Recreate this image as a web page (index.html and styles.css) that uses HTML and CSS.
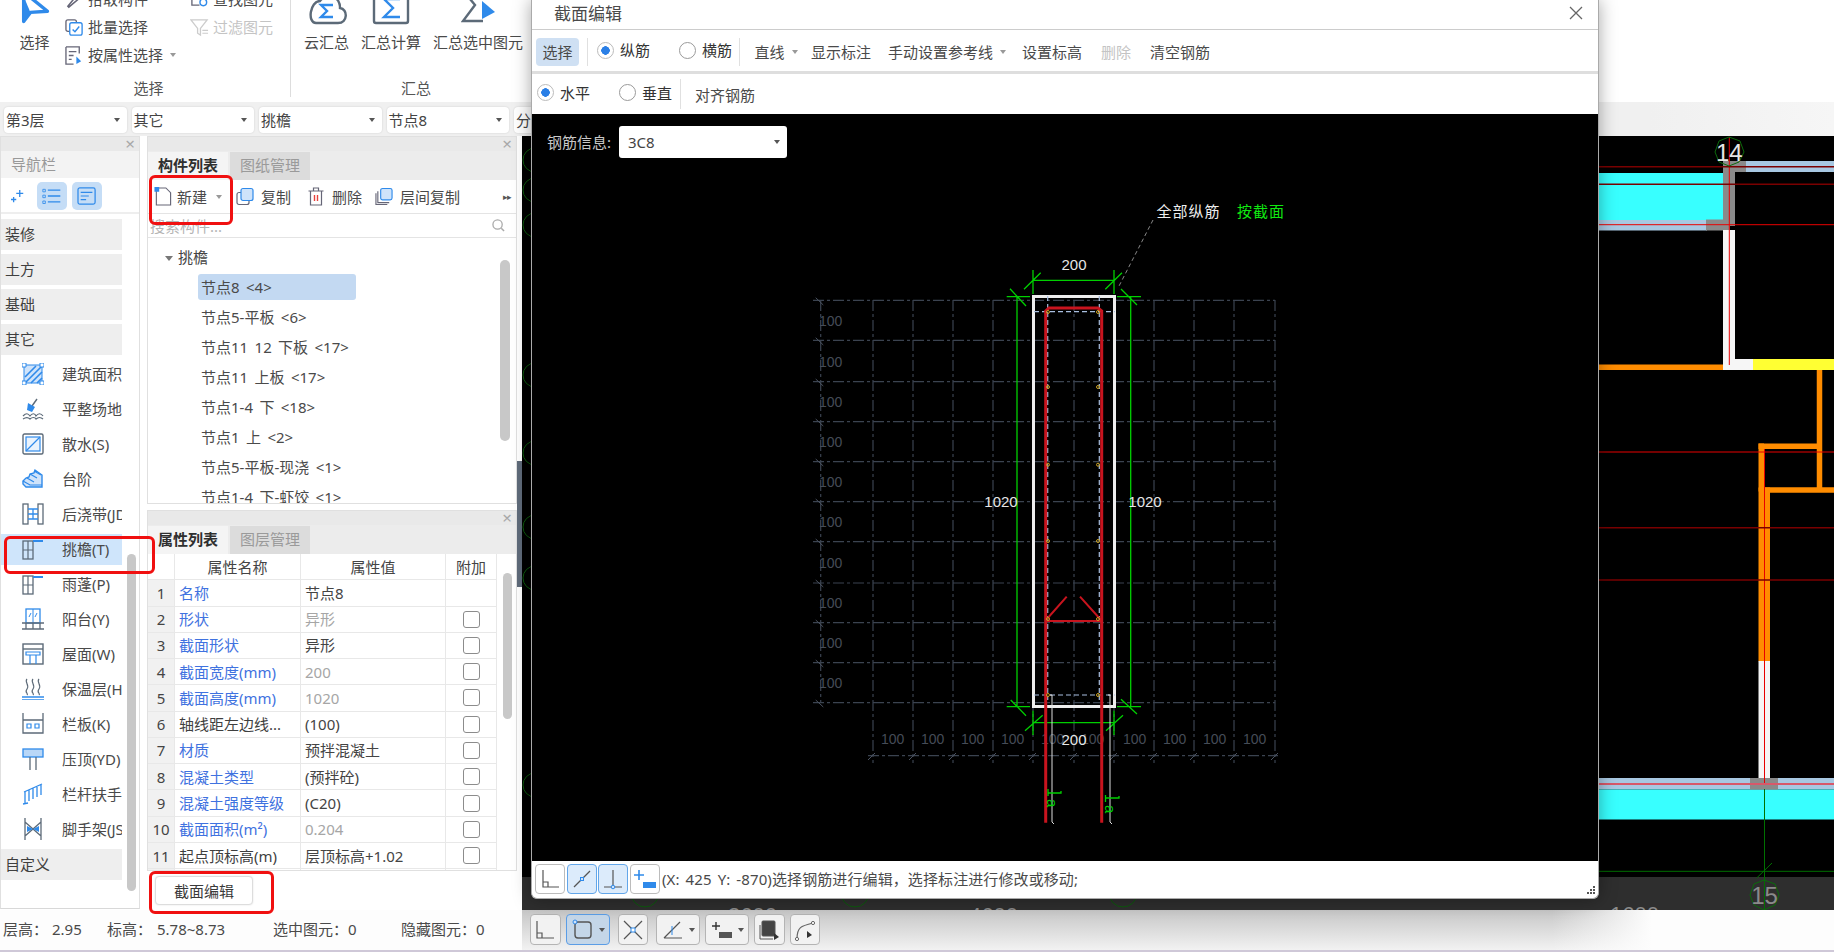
FILE: index.html
```html
<!DOCTYPE html>
<html lang="zh-CN">
<head>
<meta charset="utf-8">
<title>截面编辑</title>
<link rel="stylesheet" href="styles.css">
</head>
<body>
<div class="app">
  <header class="ribbon">
    <section class="group group-select">
      <div class="group-body">
        <div class="big-tool big-select">
          <svg class="big-icon" viewBox="0 0 26 30"><path d="M3 0v26l6-8 15-1z" fill="#fff" stroke="#2f8aea" stroke-width="3" stroke-linejoin="round"/><path d="M3 4v22l6-8z" fill="#2f8aea"/></svg>
          <span>选择</span>
        </div>
        <div class="small-col col-a">
          <div class="small-tool"><svg class="small-icon" viewBox="0 0 20 20"><path d="M3 17l10-12 3 3-12 10z" fill="none" stroke="#667" stroke-width="1.6"/></svg><span>拾取构件</span></div>
          <div class="small-tool"><svg class="small-icon" viewBox="0 0 20 20"><rect x="1" y="2" width="11" height="12" rx="2" fill="none" stroke="#667" stroke-width="1.4"/><rect x="5" y="5" width="13" height="13" rx="2" fill="#fff" stroke="#2f8aea" stroke-width="1.4"/><path d="M8 12l2.5 2.5L15 9" fill="none" stroke="#2f8aea" stroke-width="1.5"/></svg><span>批量选择</span></div>
          <div class="small-tool"><svg class="small-icon" viewBox="0 0 20 20"><path d="M1 1h14v7M1 1v18h8" fill="none" stroke="#667" stroke-width="1.4"/><path d="M4 6h8M4 10h5M4 14h3" stroke="#667" stroke-width="1.4"/><path d="M12 11v8l5-3z" fill="#2f8aea"/></svg><span>按属性选择</span><i class="caret caret-tool"></i></div>
        </div>
        <div class="small-col col-b">
          <div class="small-tool"><svg class="small-icon" viewBox="0 0 20 20"><path d="M2 6h12M2 6v10h8" fill="none" stroke="#667" stroke-width="1.4"/><circle cx="14" cy="13" r="3.5" fill="none" stroke="#2f8aea" stroke-width="1.5"/></svg><span>查找图元</span></div>
          <div class="small-tool is-disabled"><svg class="small-icon" viewBox="0 0 20 20"><path d="M1 2h17l-7 9v7l-3-2v-5z" fill="none" stroke="#ccc" stroke-width="1.4"/><path d="M13 13h6M13 16h6" stroke="#ccc" stroke-width="1.2"/></svg><span>过滤图元</span></div>
        </div>
      </div>
      <div class="group-label">选择</div>
    </section>
    <section class="group group-sum">
      <div class="group-body">
        <div class="big-tool"><svg class="big-icon cloud" viewBox="0 0 42 32"><path d="M10 30h22c10 0 10-14 2-15C34 4 22-2 14 8 4 8 1 30 10 30z" fill="#fff" stroke="#5c6a78" stroke-width="2.4"/><path d="M27 12H15l6 6-6 6h12" fill="none" stroke="#2f8aea" stroke-width="2.4"/></svg><span>云汇总</span></div>
        <div class="big-tool"><svg class="big-icon total" viewBox="0 0 38 32"><path d="M2 0v28a2 2 0 0 0 2 2h30a2 2 0 0 0 2-2V0" fill="none" stroke="#5c6a78" stroke-width="2.4"/><path d="M28 6H12l9 9-9 9h16" fill="none" stroke="#2f8aea" stroke-width="2.4"/></svg><span>汇总计算</span></div>
        <div class="big-tool"><svg class="big-icon sel" viewBox="0 0 34 32"><path d="M18 2H4l10 12L2 30h20" fill="none" stroke="#5c6a78" stroke-width="2.4" transform="translate(0 -2)"/><path d="M21 10v18l13-7z" fill="#2f8aea" transform="translate(0 -2)"/></svg><span>汇总选中图元</span></div>
      </div>
      <div class="group-label">汇总</div>
    </section>
  </header>

  <div class="filters">
    <div class="filter"><span>第3层</span><i class="caret caret-dark"></i></div>
    <div class="filter"><span>其它</span><i class="caret caret-dark"></i></div>
    <div class="filter"><span>挑檐</span><i class="caret caret-dark"></i></div>
    <div class="filter"><span>节点8</span><i class="caret caret-dark"></i></div>
    <div class="filter"><span>分层1</span><i class="caret caret-dark"></i></div>
  </div>

  <main class="work">
    <aside class="nav">
      <div class="dock-head"><span class="dock-x">×</span></div>
      <div class="nav-title">导航栏</div>
      <div class="nav-tools">
        <svg class="nav-spark" viewBox="0 0 16 16"><path d="M10 1v8M6 5h8M3 9v6M0 12h6" stroke="#2f8aea" stroke-width="1.5"/></svg>
        <span class="nav-btn"><svg viewBox="0 0 24 20"><path d="M1 2h3v3H1zM1 9h3v3H1zM1 16h3v3H1z" fill="none" stroke="#2f8aea"/><path d="M7 3h15M7 10h15M7 17h15" stroke="#2f8aea" stroke-width="1.6"/></svg></span>
        <span class="nav-btn"><svg viewBox="0 0 22 20"><rect x="1" y="1" width="19" height="18" rx="2" fill="none" stroke="#2f8aea" stroke-width="1.4"/><path d="M4 6h13M4 10h9M4 14h6" stroke="#2f8aea" stroke-width="1.3"/></svg></span>
      </div>
      <div class="nav-body">
        <ul class="nav-list">
          <li class="nav-cat">装修</li>
          <li class="nav-cat">土方</li>
          <li class="nav-cat">基础</li>
          <li class="nav-cat">其它</li>
          <li class="nav-item"><svg viewBox="0 0 22 22"><rect x="2" y="2" width="18" height="18" fill="#cfe3fa" stroke="#2f8aea"/><path d="M3 14L14 3M3 20L20 3M9 20L20 9M15 20l5-5" stroke="#2f8aea" stroke-width="1.6"/><path d="M0 0h4v4H0zM18 0h4v4h-4zM0 18h4v4H0zM18 18h4v4h-4z" fill="#fff" stroke="#2f8aea"/></svg><span>建筑面积</span></li>
          <li class="nav-item"><svg viewBox="0 0 22 22"><path d="M15 1l-5 7" stroke="#5c6a78" stroke-width="1.4"/><path d="M6 5l7 4-3 5-5-2z" fill="#2f8aea"/><path d="M1 18c3-3 5-3 7 0 2-3 5-3 6 0 2-3 5-3 7 0M1 21c3-2 5-2 7 0 2-2 5-2 6 0 2-2 5-2 7 0" fill="none" stroke="#5c6a78" stroke-width="1.2"/></svg><span>平整场地</span></li>
          <li class="nav-item"><svg viewBox="0 0 22 22"><rect x="1" y="1" width="20" height="20" rx="1.5" fill="#fff" stroke="#5c6a78" stroke-width="1.4"/><rect x="4" y="4" width="14" height="14" fill="#eaf3fd" stroke="#2f8aea" stroke-width="1.2"/><path d="M4 18L18 4" stroke="#2f8aea" stroke-width="1.2"/></svg><span>散水(S)</span></li>
          <li class="nav-item"><svg viewBox="0 0 22 22"><path d="M1 13l3-3 3-1 1-3 4-1 1-3 7 5v12H4l-3-3z" fill="#cfe3fa" stroke="#2f8aea" stroke-width="1.4"/><path d="M1 13l7 4h12M5 10l7 4M8 6l7 4M12 3l7 4" fill="none" stroke="#2f8aea" stroke-width="1.2"/></svg><span>台阶</span></li>
          <li class="nav-item"><svg viewBox="0 0 22 22"><rect x="1" y="1" width="5" height="20" fill="none" stroke="#5c6a78" stroke-width="1.3"/><rect x="16" y="1" width="5" height="20" fill="none" stroke="#5c6a78" stroke-width="1.3"/><path d="M6 6h10M6 11h10M6 16h10M11 6v10" stroke="#2f8aea" stroke-width="1.3"/></svg><span>后浇带(JD)</span></li>
          <li class="nav-item is-active"><svg viewBox="0 0 22 22"><rect x="1" y="3" width="10" height="18" fill="none" stroke="#5c6a78" stroke-width="1.3"/><path d="M6 3v18M1 12h10" stroke="#5c6a78" stroke-width="1.2"/><path d="M11 3h10" stroke="#2f8aea" stroke-width="2"/></svg><span>挑檐(T)</span></li>
          <li class="nav-item"><svg viewBox="0 0 22 22"><rect x="1" y="3" width="10" height="18" fill="none" stroke="#5c6a78" stroke-width="1.3"/><path d="M6 3v18M1 12h10" stroke="#5c6a78" stroke-width="1.2"/><path d="M11 4h10" stroke="#2f8aea" stroke-width="2"/></svg><span>雨蓬(P)</span></li>
          <li class="nav-item"><svg viewBox="0 0 22 22"><rect x="4" y="1" width="14" height="14" fill="none" stroke="#2f8aea" stroke-width="1.3"/><path d="M11 1v14M7 9l2-4M13 9l2-4" stroke="#2f8aea"/><path d="M0 15h22M0 21h22M4 15v6M11 15v6M18 15v6" stroke="#5c6a78" stroke-width="1.3"/></svg><span>阳台(Y)</span></li>
          <li class="nav-item"><svg viewBox="0 0 22 22"><rect x="1" y="1" width="20" height="20" fill="none" stroke="#5c6a78" stroke-width="1.4"/><path d="M1 6h20" stroke="#5c6a78" stroke-width="1.4"/><path d="M4 9h14v3H4zM8 12v9M14 12v9" fill="none" stroke="#2f8aea" stroke-width="1.2"/></svg><span>屋面(W)</span></li>
          <li class="nav-item"><svg viewBox="0 0 22 22"><path d="M5 1c-3 3 3 6 0 10s2 4 0 6M11 1c-3 3 3 6 0 10s2 4 0 6M17 1c-3 3 3 6 0 10s2 4 0 6" fill="none" stroke="#5c6a78" stroke-width="1.2"/><path d="M0 19h22M0 22h22" stroke="#2f8aea" stroke-width="1.3"/></svg><span>保温层(H)</span></li>
          <li class="nav-item"><svg viewBox="0 0 22 22"><path d="M1 0v20h20V0M1 7h20" fill="none" stroke="#5c6a78" stroke-width="1.3"/><path d="M5 11h4v4H5zM13 11h4v4h-4z" fill="none" stroke="#2f8aea" stroke-width="1.2"/></svg><span>栏板(K)</span></li>
          <li class="nav-item"><svg viewBox="0 0 22 22"><rect x="1" y="1" width="20" height="8" fill="#b9d7f7" stroke="#2f8aea" stroke-width="1.3"/><path d="M8 9v13M14 9v13" stroke="#5c6a78" stroke-width="1.3"/></svg><span>压顶(YD)</span></li>
          <li class="nav-item"><svg viewBox="0 0 22 22"><path d="M2 9L20 1M3 9v12M7 7v11M11 5v11M15 4v10M19 2v10M1 21l5-1" fill="none" stroke="#2f8aea" stroke-width="1.3"/></svg><span>栏杆扶手</span></li>
          <li class="nav-item"><svg viewBox="0 0 22 22"><path d="M3 0v22M19 0v22M3 4l16 14M19 4L3 18" fill="none" stroke="#5c6a78" stroke-width="1.3"/><path d="M5 8l6 3-6 3zM17 8l-6 3 6 3z" fill="#2f8aea"/></svg><span>脚手架(JSJ)</span></li>
          <li class="nav-cat">自定义</li>
        </ul>
        <div class="track nav-track"><div class="thumb"></div></div>
      </div>
    </aside>

    <div class="mid">
      <section class="panel comp">
        <div class="dock-head"><span class="dock-x">×</span></div>
        <div class="tabs"><span class="tab is-on">构件列表</span><span class="tab">图纸管理</span></div>
        <div class="comp-tools">
          <span class="ct ct-new"><svg viewBox="0 0 18 20"><path d="M2 1h10l5 5v13H2z" fill="#fff" stroke="#667" stroke-width="1.2"/><path d="M0 0h5v5H0z" fill="#2f8aea"/></svg><b>新建</b><i class="caret caret-tool"></i></span>
          <span class="ct ct-copy"><svg viewBox="0 0 18 18"><rect x="1" y="5" width="12" height="12" rx="2" fill="none" stroke="#667" stroke-width="1.2"/><rect x="5" y="1" width="12" height="12" rx="2" fill="#cfe3fa" stroke="#2f8aea" stroke-width="1.2"/></svg><b>复制</b></span>
          <span class="ct ct-del"><svg viewBox="0 0 17 19"><path d="M3 4h11v14H3zM1 4h15M6 4V1h5v3" fill="none" stroke="#667" stroke-width="1.2"/><path d="M7 8v6M10 8v6" stroke="#e8413c" stroke-width="1.4"/></svg><b>删除</b></span>
          <span class="ct ct-floor"><svg viewBox="0 0 19 19"><path d="M1 6v12h12" fill="none" stroke="#667" stroke-width="1.2"/><path d="M3 4v12h12" fill="none" stroke="#667" stroke-width="1.2"/><rect x="6" y="1" width="12" height="12" rx="2" fill="#cfe3fa" stroke="#2f8aea" stroke-width="1.2"/></svg><b>层间复制</b></span>
          <span class="ct-more">▸▸</span>
        </div>
        <div class="search"><span>搜索构件...</span><svg viewBox="0 0 14 14"><circle cx="6" cy="6" r="5" fill="none" stroke="#aaa" stroke-width="1.4"/><path d="M10 10l3 3" stroke="#aaa" stroke-width="1.6"/></svg></div>
        <div class="comp-body">
          <ul class="tree">
            <li class="tree-root"><i class="caret caret-tree"></i>挑檐</li>
            <li class="tree-row"><span class="tree-sel">节点8 &lt;4&gt;</span></li>
            <li class="tree-row"><span>节点5-平板 &lt;6&gt;</span></li>
            <li class="tree-row"><span>节点11 12 下板 &lt;17&gt;</span></li>
            <li class="tree-row"><span>节点11 上板 &lt;17&gt;</span></li>
            <li class="tree-row"><span>节点1-4 下 &lt;18&gt;</span></li>
            <li class="tree-row"><span>节点1 上 &lt;2&gt;</span></li>
            <li class="tree-row"><span>节点5-平板-现浇 &lt;1&gt;</span></li>
            <li class="tree-row"><span>节点1-4 下-虾饺 &lt;1&gt;</span></li>
          </ul>
          <div class="track comp-track"><div class="thumb"></div></div>
        </div>
      </section>

      <section class="panel props">
        <div class="dock-head"><span class="dock-x">×</span></div>
        <div class="tabs"><span class="tab is-on">属性列表</span><span class="tab">图层管理</span></div>
        <div class="props-body">
          <div class="grid">
            <div class="gh"></div><div class="gh">属性名称</div><div class="gh">属性值</div><div class="gh">附加</div>
            <div class="gi">1</div><div class="gn blue">名称</div><div class="gv">节点8</div><div class="gc"></div>
            <div class="gi">2</div><div class="gn blue">形状</div><div class="gv muted">异形</div><div class="gc"><i class="check"></i></div>
            <div class="gi">3</div><div class="gn blue">截面形状</div><div class="gv">异形</div><div class="gc"><i class="check"></i></div>
            <div class="gi">4</div><div class="gn blue">截面宽度(mm)</div><div class="gv muted">200</div><div class="gc"><i class="check"></i></div>
            <div class="gi">5</div><div class="gn blue">截面高度(mm)</div><div class="gv muted">1020</div><div class="gc"><i class="check"></i></div>
            <div class="gi">6</div><div class="gn">轴线距左边线...</div><div class="gv">(100)</div><div class="gc"><i class="check"></i></div>
            <div class="gi">7</div><div class="gn blue">材质</div><div class="gv">预拌混凝土</div><div class="gc"><i class="check"></i></div>
            <div class="gi">8</div><div class="gn blue">混凝土类型</div><div class="gv">(预拌砼)</div><div class="gc"><i class="check"></i></div>
            <div class="gi">9</div><div class="gn blue">混凝土强度等级</div><div class="gv">(C20)</div><div class="gc"><i class="check"></i></div>
            <div class="gi">10</div><div class="gn blue">截面面积(m²)</div><div class="gv muted">0.204</div><div class="gc"><i class="check"></i></div>
            <div class="gi">11</div><div class="gn">起点顶标高(m)</div><div class="gv">层顶标高+1.02</div><div class="gc"><i class="check"></i></div>
            <div class="gi"></div><div class="gn"></div><div class="gv"></div><div class="gc"></div>
          </div>
          <div class="track props-track"><div class="thumb"></div></div>
        </div>
      </section>

      <div class="mid-foot"><button class="btn">截面编辑</button></div>
    </div>

    <div class="splitter"><div class="splitter-handle"></div></div>

    <div class="canvas">
      <svg class="canvas-svg" viewBox="522 136 1312 774" width="1312" height="774">
        <rect x="522" y="136" width="1312" height="774" fill="#000"/>
        <rect x="522" y="877" width="1312" height="33" fill="#2e2e2e"/>
        <g class="axis-dark">
          <circle cx="535" cy="160" r="12"/><circle cx="535" cy="190" r="12"/><circle cx="535" cy="225" r="12"/><circle cx="535" cy="375" r="12"/><circle cx="535" cy="453" r="12"/><circle cx="535" cy="527" r="12"/><circle cx="535" cy="578" r="12"/><circle cx="535" cy="785" r="12"/>
          <circle cx="645" cy="893" r="14"/><circle cx="855" cy="893" r="14"/><circle cx="1123" cy="893" r="14"/>
        </g>
        <text class="cv-big" x="728" y="923">3600</text>
        <text class="cv-big" x="969" y="923">4600</text>
        <text class="cv-big" x="1610" y="922">1600</text>

        <rect x="1599" y="173" width="124" height="47" fill="#38ffff"/>
        <rect x="1599" y="220" width="108" height="10.5" fill="#a8c8e2"/>
        <rect x="1706" y="219.5" width="24" height="11" fill="#8a8a8a"/>
        <rect x="1723" y="165" width="12" height="61" fill="#8a8a8a"/>
        <rect x="1723" y="161" width="24" height="11" fill="#8a8a8a"/>
        <rect x="1746" y="161" width="88" height="11" fill="#a8c8e2"/>
        <rect x="1723" y="230" width="12" height="140" fill="#f6f6f6"/>
        <rect x="1599" y="364.5" width="124" height="5.5" fill="#ff8c00"/>
        <rect x="1723" y="359" width="30" height="11" fill="#f6f6f6"/>
        <rect x="1735" y="359" width="18" height="11" fill="#f6f6f6"/>
        <rect x="1753" y="359" width="81" height="11" fill="#ffff33"/>
        <path class="orange" d="M1819.500 370V490M1758.500 446.200H1822M1764 490H1834"/>
        <rect x="1758.500" y="443.500" width="5.500" height="48" fill="#ff8c00"/>
        <rect x="1758.500" y="487.500" width="11.500" height="174" fill="#ff8c00"/>
        <rect x="1758.500" y="661" width="11.500" height="117" fill="#f6f6f6"/>
        <rect x="1599" y="778" width="235" height="11.500" fill="#a8c8e2"/>
        <rect x="1599" y="789.500" width="235" height="30" fill="#38ffff"/>
        <rect x="1750" y="778" width="28" height="11.500" fill="#8a8a8a"/>
        <path class="rl" d="M1729.300 137V365M1599 224.700H1834M1599 452H1834M1764.500 449V784"/>
        <path class="rl-dark" d="M1599 166.700H1834M1599 184.300H1834M1599 527.700H1834M1599 580H1834"/>
        <path class="rl-soft" d="M1599 784H1834"/>
        <path class="gl" d="M1764.500 789V910M1599 871.300H1834M1756.700 878L1772 863"/>
        <polygon class="axis-poly" points="1729,137 1740,141 1744,152 1739,162 1729,166 1719,162 1715,152 1719,141"/>
        <text class="axis-num" x="1729.300" y="161">14</text>
        <polygon class="axis-poly" points="1764,880 1775,884 1779,895 1775,905 1764,910 1754,905 1750,895 1754,884"/>
        <text class="axis-num axis-num-dim" x="1764.500" y="904">15</text>
      </svg>
    </div>
  </main>

  <footer class="statusbar">
    <div class="stats">
      <span class="stat s1"><b>层高：</b>2.95</span>
      <span class="stat s2"><b>标高：</b>5.78~8.73</span>
      <span class="stat s3"><b>选中图元：</b>0</span>
      <span class="stat s4"><b>隐藏图元：</b>0</span>
    </div>
    <div class="snaps">
      <span class="snap"><svg viewBox="0 0 24 24"><path d="M4 3v17h17M4 15h5v5" fill="none" stroke="#555" stroke-width="1.2"/></svg></span>
      <span class="snap snap-wide snap-on"><svg viewBox="0 0 24 24"><rect x="4" y="4" width="16" height="16" rx="3" fill="none" stroke="#555" stroke-width="1.4"/><circle cx="4" cy="4" r="2" fill="#cfe3fa" stroke="#2f8aea"/></svg><i class="caret caret-dark"></i></span>
      <span class="snap snap-gap"><svg viewBox="0 0 24 24"><path d="M3 3l18 18M21 3L3 21" stroke="#555" stroke-width="1.2"/><rect x="10" y="10" width="4" height="4" fill="#fff" stroke="#2f8aea"/></svg></span>
      <span class="snap snap-wide snap-gap"><svg viewBox="0 0 24 24"><path d="M3 20h18M3 20L19 4" fill="none" stroke="#555" stroke-width="1.2"/><path d="M11 8v9" stroke="#2f8aea"/></svg><i class="caret caret-dark"></i></span>
      <span class="snap snap-wide"><svg viewBox="0 0 24 24"><path d="M6 4v8M2 8h8" stroke="#333" stroke-width="1.4"/><rect x="9" y="14" width="13" height="6" fill="#555"/></svg><i class="caret caret-dark"></i></span>
      <span class="snap"><svg viewBox="0 0 24 24"><rect x="5" y="3" width="13" height="15" rx="1" fill="#444" stroke="#555"/><path d="M3 7v14h13" fill="none" stroke="#555"/><path d="M17 15v7l5-3z" fill="#333"/></svg></span>
      <span class="snap"><svg viewBox="0 0 24 24"><path d="M4 21c0-12 4-13 16-16" fill="none" stroke="#666" stroke-width="1.2"/><circle cx="4" cy="21" r="1.6" fill="#fff" stroke="#666"/><circle cx="20" cy="5" r="1.6" fill="#fff" stroke="#666"/><path d="M14 13v7l5-3z" fill="#333"/></svg></span>
    </div>
  </footer>

  <div class="mark mark-new"></div>
  <div class="mark mark-item"></div>
  <div class="mark mark-btn"></div>

  <div class="dialog">
    <div class="dlg-title"><span>截面编辑</span><svg class="dlg-close" viewBox="0 0 14 14"><path d="M1 1l12 12M13 1L1 13" stroke="#666" stroke-width="1.3"/></svg></div>
    <div class="dlg-row dlg-row-a">
      <span class="dlg-btn is-on">选择</span>
      <i class="vsep sep-a"></i>
      <label class="radio r1"><i class="dot is-on"></i>纵筋</label>
      <label class="radio r2"><i class="dot"></i>横筋</label>
      <i class="vsep sep-b"></i>
      <span class="dlg-act a-line">直线<i class="caret caret-tool"></i></span>
      <span class="dlg-act a-show">显示标注</span>
      <span class="dlg-act a-ref">手动设置参考线<i class="caret caret-tool"></i></span>
      <span class="dlg-act a-level">设置标高</span>
      <span class="dlg-act a-del is-off">删除</span>
      <span class="dlg-act a-clear">清空钢筋</span>
    </div>
    <div class="dlg-row dlg-row-b">
      <label class="radio r3"><i class="dot is-on"></i>水平</label>
      <label class="radio r4"><i class="dot"></i>垂直</label>
      <i class="vsep sep-c"></i>
      <span class="dlg-act a-align">对齐钢筋</span>
    </div>
    <div class="stage">
      <svg class="stage-svg" viewBox="532 114 1066 747" width="1066" height="747">
        <rect x="532" y="114" width="1066" height="747" fill="#000"/>
        <path class="grid-line" d="M813 300.300H1275M813 340.300H1275M813 381.700H1275M813 421.700H1275M813 461.700H1275M813 501.700H1275M813 541.700H1275M813 583H1275M813 622.700H1275M813 662.700H1275M813 702.700H1275M868 755.700H1278"/>
        <path class="grid-line" d="M820.700 300V703M873 300V763M913 300V763M953 300V763M993 300V763M1033 300V763M1074 300V763M1114 300V763M1154 300V763M1194 300V763M1234 300V763M1275 300V763"/>
        <path class="grid-tick" d="M815.700 297.700L823.300 305M815.700 337.700L823.300 345M815.700 379L823.300 386M815.700 419L823.300 426M815.700 459L823.300 466M815.700 499L823.300 506M815.700 539L823.300 546M815.700 580L823.300 587M815.700 620L823.300 627M815.700 660L823.300 667M815.700 700L823.300 707M868 760L875 753M909 760L916 753M949 760L956 753M989 760L996 753M1029 760L1036 753M1070 760L1077 753M1110 760L1117 753M1150 760L1157 753M1190 760L1197 753M1230 760L1237 753M1271 760L1278 753"/>
        <g class="grid-text">
          <text x="819" y="326">100</text><text x="819" y="367">100</text><text x="819" y="407">100</text><text x="819" y="447">100</text><text x="819" y="487">100</text><text x="819" y="527">100</text><text x="819" y="568">100</text><text x="819" y="608">100</text><text x="819" y="648">100</text><text x="819" y="688">100</text>
          <text x="881" y="744">100</text><text x="921" y="744">100</text><text x="961" y="744">100</text><text x="1001" y="744">100</text><text x="1041" y="744">100</text><text x="1081" y="744">100</text><text x="1123" y="744">100</text><text x="1163" y="744">100</text><text x="1203" y="744">100</text><text x="1243" y="744">100</text>
        </g>
        <path class="leader" d="M1153 220L1118 288"/>
        <rect class="section" x="1033.500" y="296.500" width="81" height="410"/>
        <path class="green" d="M1017 297V707M1130.700 297V707M1006.700 296.700H1030M1117 296.700H1141M1006.700 706.700H1030M1117 706.700H1141M1010 288.700L1026 306M1121 289L1137 305M1010.700 700L1026 715.700M1121 699.300L1137 714M1033 280.300H1114M1033 270V294M1114 270V294M1024 289.300L1040.700 272.700M1105.300 289.300L1122 272.700M1033 722.700H1114M1033 710.700V735M1114 710.700V735M1025 730.700L1042.700 715.300M1106 730.700L1123 715.300"/>
        <path class="blue-dash" d="M1047.700 296V700M1099.300 296V700M1034 311.700H1115M1034 695H1115"/>
        <path class="rebar" d="M1045.700 822.700V311L1049 308H1098L1101.700 311V822.700"/>
        <path class="rebar-thin" d="M1046 621H1101M1046 620L1066.700 596.700M1101 620L1080 596.700"/>
        <g class="node">
          <circle cx="1048" cy="312" r="1.500"/><circle cx="1098" cy="312" r="1.500"/><circle cx="1048" cy="387" r="1.500"/><circle cx="1098" cy="387" r="1.500"/><circle cx="1048" cy="464.700" r="1.500"/><circle cx="1098" cy="464.700" r="1.500"/><circle cx="1048" cy="541" r="1.500"/><circle cx="1098" cy="541" r="1.500"/><circle cx="1048" cy="619" r="1.500"/><circle cx="1098" cy="619" r="1.500"/><circle cx="1048" cy="695" r="1.500"/><circle cx="1098" cy="695" r="1.500"/>
        </g>
        <path class="white-thin" d="M1050 695H1052V822L1054 824M1108 695H1110V822L1112 824"/>
        <path class="green" d="M1048 789V796M1048 793H1061V791M1105.500 795V802M1105.500 798H1119V796"/>
        <text class="la" transform="translate(1047 799) rotate(90)">a</text>
        <text class="la" transform="translate(1105 805) rotate(90)">a</text>
        <text class="dim" x="1074" y="270" text-anchor="middle">200</text>
        <text class="dim" x="1074" y="745" text-anchor="middle">200</text>
        <text class="dim" x="1001" y="507" text-anchor="middle">1020</text>
        <text class="dim" x="1145" y="507" text-anchor="middle">1020</text>
        <text class="cap" x="1156.500" y="217">全部纵筋</text>
        <text class="cap cap-green" x="1237" y="217">按截面</text>
      </svg>
      <div class="rebar-info">
        <span class="rebar-label">钢筋信息:</span>
        <div class="rebar-select"><span>3C8</span><i class="caret caret-dark"></i></div>
      </div>
    </div>
    <div class="dlg-foot">
      <span class="ft"><svg viewBox="0 0 24 24"><path d="M5 3v17h16M5 15h5v5" fill="none" stroke="#555" stroke-width="1.2"/></svg></span>
      <span class="ft ft-on"><svg viewBox="0 0 24 24"><path d="M4 20L20 4" stroke="#555" stroke-width="1.2"/><rect x="10.500" y="10.500" width="3" height="3" fill="#cfe3fa" stroke="#2f8aea"/></svg></span>
      <span class="ft ft-on"><svg viewBox="0 0 24 24"><path d="M12 3v17M3 20h18" stroke="#555" stroke-width="1.2"/><circle cx="12" cy="20" r="1.800" fill="#cfe3fa" stroke="#2f8aea"/></svg></span>
      <span class="ft"><svg viewBox="0 0 24 24"><path d="M6 3v10M1 8h10" stroke="#2f8aea" stroke-width="1.6"/><rect x="10" y="15" width="13" height="6" fill="#2f8aea"/></svg></span>
      <span class="ft-text">(X: 425 Y: -870)选择钢筋进行编辑，选择标注进行修改或移动;</span>
      <svg class="grip" viewBox="0 0 10 10"><path d="M8 0h2v2H8zM5 3h2v2H5zM8 3h2v2H8zM2 6h2v2H2zM5 6h2v2H5zM8 6h2v2H8z" fill="#555" transform="translate(0 1)"/></svg>
    </div>
  </div>
</div>
</body>
</html>
```

FILE: styles.css
```css
* { box-sizing: border-box; }
html, body { margin: 0; padding: 0; height: 100%; overflow: hidden; background: #fff; }
body { font-family: "Noto Sans", "Noto Sans CJK SC", sans-serif; font-size: 15px; line-height: 20px; color: #3a3a3a; }
ul { list-style: none; margin: 0; padding: 0; }
b { font-weight: 400; }
svg { display: block; flex: none; }

.app { position: relative; width: 1834px; height: 952px; overflow: hidden; display: flex; flex-direction: column; }

.caret { display: inline-block; width: 0; height: 0; border-left: 3.5px solid transparent; border-right: 3.5px solid transparent; border-top: 4px solid #999; flex: none; }
.caret-dark { border-top-color: #555; }
.caret-tool { margin-left: 7px; vertical-align: middle; }
.caret-tree { border-top-color: #777; border-left-width: 4px; border-right-width: 4px; border-top-width: 5px; margin-right: 5px; vertical-align: middle; }

/* ribbon */
.ribbon { height: 102px; flex: none; display: flex; background: #fff; }
.group { display: flex; flex-direction: column; height: 97px; }
.group-select { width: 291px; border-right: 1px solid #ddd; }
.group-select .group-label { padding-left: 7px; }
.group-sum { padding: 0 13px; width: 250px; }
.group-body { height: 69px; flex: none; display: flex; align-items: flex-end; overflow: hidden; }
.group-label { text-align: center; height: 28px; line-height: 38px; color: #555; }
.big-tool { display: flex; flex-direction: column; align-items: center; padding-bottom: 17px; margin-right: 12px; white-space: nowrap; color: #4a4a4a; }
.big-select { margin-left: 19px; margin-right: 0; width: 31px; }
.big-tool .big-icon { height: 34px; width: 30px; margin-bottom: 6px; }
.big-icon.cloud { width: 42px; }
.big-icon.total { width: 38px; }
.big-icon.sel { width: 34px; }
.small-col { display: flex; flex-direction: column; justify-content: flex-end; }
.col-a { margin-left: 15px; width: 125px; }
.col-b { width: 100px; padding-bottom: 28px; }
.small-tool { height: 28px; display: flex; align-items: center; white-space: nowrap; color: #4a4a4a; }
.small-icon { width: 19px; height: 19px; margin-right: 4px; }
.is-disabled { color: #c4c4c4; }

/* filters */
.filters { height: 34px; flex: none; display: flex; gap: 5px; padding: 4.500px 0 0 4px; background: linear-gradient(90deg, #f0f0f0 0, #f0f0f0 1650px, #f6f6f6 100%); overflow: hidden; }
.filter { width: 122.500px; height: 26px; flex: none; background: #fff; border-radius: 4px; box-shadow: 0 0 2px rgba(0,0,0,.15); display: flex; align-items: center; justify-content: space-between; padding: 0 7px 0 2px; color: #444; }

/* work */
.work { height: 774px; flex: none; display: flex; background: #fff; }
.nav { width: 140px; height: 773px; flex: none; border: 1px solid #e0e0e0; border-bottom-color: #d8d8d8; display: flex; flex-direction: column; }
.dock-head { height: 14px; flex: none; background: #e9e9e9; position: relative; }
.dock-x { position: absolute; right: 4px; top: -3px; color: #a8a8a8; font-size: 17px; line-height: 20px; }
.nav-title { height: 27px; flex: none; background: #f3f3f3; color: #999; line-height: 27px; padding-left: 10px; }
.nav-tools { height: 36px; flex: none; display: flex; align-items: center; border-bottom: 2px solid #eee; padding: 2px 0 0 10px; }
.nav-spark { width: 14px; height: 14px; margin-right: 12px; }
.nav-btn { width: 30px; height: 28px; border-radius: 5px; background: #c5ddf6; display: flex; align-items: center; justify-content: center; margin-right: 5px; }
.nav-btn svg { width: 20px; height: 18px; }
.nav-body { flex: 1; display: flex; min-height: 0; }
.nav-list { width: 121px; flex: none; padding-top: 5px; }
.nav-cat { height: 31px; margin-bottom: 4px; line-height: 31px; padding-left: 4px; background: #eee; color: #3f3f3f; overflow: hidden; }
.nav-item { height: 31px; margin-bottom: 4px; display: flex; align-items: center; padding: 0 0 2px 21px; white-space: nowrap; overflow: hidden; color: #4a4a4a; }
.nav-item svg { width: 22px; height: 22px; margin-right: 18px; }
.is-active { background: #cfe5fb; }

.track { flex: none; }
.thumb { background: #c8c8c8; border-radius: 5px; }
.nav-track { width: 17px; padding-left: 5px; }
.nav-track .thumb { width: 9px; height: 337px; margin-top: 340px; }

/* middle */
.mid { width: 370px; flex: none; margin-left: 7px; display: flex; flex-direction: column; }
.panel { border: 1px solid #e0e0e0; display: flex; flex-direction: column; flex: none; background: #fff; }
.comp { height: 368px; }
.props { height: 361px; margin-top: 6px; }
.tabs { height: 29px; flex: none; background: #ececec; display: flex; padding-top: 1px; }
.tab { width: 80px; flex: none; margin-right: 2px; text-align: center; line-height: 26px; background: #dcdcdc; color: #9a9a9a; }
.tab.is-on { background: #f4f4f4; color: #2f2f2f; font-weight: 700; }
.comp-tools { height: 34px; flex: none; display: flex; align-items: center; border-bottom: 1px solid #e4e4e4; }
.ct { display: flex; align-items: center; white-space: nowrap; color: #4a4a4a; }
.ct svg { width: 18px; height: 19px; margin-right: 7px; }
.ct-new { margin-left: 6px; width: 82px; }
.ct-new svg { margin-right: 5px; }
.ct-new .caret { margin-left: 9px; }
.ct-copy { width: 71px; }
.ct-del { width: 68px; }
.ct-floor { width: 88px; }
.ct-more { font-size: 9px; color: #555; letter-spacing: -1px; margin-left: 40px; }
.search { height: 24px; flex: none; display: flex; align-items: center; justify-content: space-between; padding: 0 11px 0 2px; color: #b4b4b4; border-bottom: 1px solid #e4e4e4; }
.search svg { width: 13px; height: 13px; }
.comp-body { flex: 1; min-height: 0; display: flex; overflow: hidden; }
.tree { flex: 1; padding-top: 4px; white-space: nowrap; }
.tree-root { height: 30px; line-height: 30px; padding-left: 17px; color: #444; }
.tree-row { height: 30px; display: flex; align-items: center; padding-left: 50px; color: #4a4a4a; word-spacing: 2.500px; }
.tree-row span { padding-left: 3px; }
.tree-row .tree-sel { width: 158px; height: 26px; line-height: 26px; background: #c3d9f2; border-radius: 3px; }
.comp-track { width: 20px; padding-left: 4px; }
.comp-track .thumb { width: 10px; height: 181px; margin-top: 22px; }

.props-body { flex: 1; min-height: 0; display: flex; overflow: hidden; }
.grid { flex: 1; display: grid; grid-template-columns: 27px 126px 145px 51px; grid-auto-rows: 26.270px; }
.grid > div { border-right: 1px solid #e8e8e8; border-bottom: 1px solid #e8e8e8; display: flex; align-items: center; white-space: nowrap; overflow: hidden; }
.grid > .gh { justify-content: center; color: #444; }
.grid > .gi { justify-content: center; background: #f1f1f1; color: #444; }
.gn { padding-left: 4px; color: #3f3f3f; }
.gn.blue { color: #3f72e0; }
.gv { padding-left: 4px; color: #444; }
.gv.muted { color: #a6a6a6; }
.grid > .gc { justify-content: center; }
.check { display: block; width: 17px; height: 17px; border: 1px solid #8c8c8c; border-radius: 3px; background: #fff; }
.props-track { width: 19px; padding-left: 6px; }
.props-track .thumb { width: 9px; height: 146px; margin-top: 19px; }

.mid-foot { flex: 1; padding: 5px 0 0 8px; }
.btn { display: block; width: 98px; height: 29px; border: 1px solid #ddd; border-radius: 4px; background: #fff; box-shadow: 0 0 2px rgba(0,0,0,.12); font: inherit; color: #3a3a3a; padding: 0; }

.splitter { width: 5px; flex: none; }
.splitter-handle { height: 126px; margin-top: 325px; background: #5f6b7a; }

.canvas { flex: 1; min-width: 0; overflow: hidden; background: #000; }
.orange { fill: none; stroke: #ff8c00; stroke-width: 5.500; }
.rl { fill: none; stroke: #e80000; stroke-width: 1; }
.rl-dark { fill: none; stroke: #7a0000; stroke-width: 1.500; }
.rl-soft { fill: none; stroke: #d8586a; stroke-width: 2; }
.gl { fill: none; stroke: #007000; stroke-width: 1; }
.axis-dark { fill: none; stroke: #0c5a0c; stroke-width: 1; }
.axis-poly { fill: none; stroke: #0b6a0b; stroke-width: 1; }
.axis-num { font-family: "Liberation Sans", sans-serif; font-size: 24px; fill: #e6e6e6; text-anchor: middle; }
.axis-num-dim { fill: #8a8a8a; }
.cv-big { font-family: "Liberation Sans", sans-serif; font-size: 22px; fill: #8c8c8c; }

/* status */
.statusbar { height: 42px; flex: none; display: flex; border-bottom: 2px solid #cfc8d8; background: #fdfdfd; }
.stats { width: 522px; flex: none; display: flex; align-items: center; padding: 0 0 2px 3px; white-space: nowrap; color: #4a4a4a; }
.stat b { display: inline-block; }
.s1 { width: 104px; } .s1 b { width: 49px; }
.s2 { width: 166px; } .s2 b { width: 50px; }
.s3 { width: 128px; } .s3 b { width: 75px; }
.s4 b { width: 75px; }
.snaps { flex: 1; display: flex; gap: 5px; padding: 4px 0 0 8px; background: linear-gradient(90deg, rgba(253,253,253,0) 0, rgba(253,253,253,0) 1030px, #fdfdfd 1130px), linear-gradient(180deg, #c6c6c6, #f2f2f2); }
.snap { width: 30.500px; height: 31px; border: 1px solid #b4b4b4; border-radius: 4px; background: #f2f2f2; display: flex; align-items: center; justify-content: center; gap: 4px; flex: none; }
.snap svg { width: 24px; height: 24px; }
.snap-wide { width: 44px; }
.snap-gap { margin-left: 3px; }
.snap-on { background: #c4d6e8; border-color: #5b9de6; }

/* annotations */
.mark { position: absolute; border: 3px solid #f01010; border-radius: 6px; pointer-events: none; z-index: 5; }
.mark-new { left: 149px; top: 175px; width: 84px; height: 50px; }
.mark-item { left: 4px; top: 536px; width: 151px; height: 38px; }
.mark-btn { left: 149px; top: 871px; width: 125px; height: 43px; }

/* dialog */
.dialog { position: absolute; left: 531px; top: 0; width: 1068px; height: 899px; background: #fff; border: 1px solid #aaa; border-top: 0; border-radius: 0 0 6px 6px; box-shadow: 0 0 18px rgba(0,0,0,.35); display: flex; flex-direction: column; z-index: 4; }
.dlg-title { height: 30px; flex: none; display: flex; align-items: center; justify-content: space-between; padding: 0 15px 2px 22px; font-size: 17px; color: #4a4a4a; border-bottom: 1px solid #ccc; }
.dlg-close { width: 14px; height: 14px; margin-top: -2px; }
.dlg-row { flex: none; display: flex; align-items: center; white-space: nowrap; color: #4a4a4a; }
.dlg-row-a { height: 41px; padding-top: 2px; }
.dlg-row-b { height: 43px; border-top: 3px solid #dedede; }
.dlg-btn { width: 43px; height: 28px; margin-left: 4px; border-radius: 4px; line-height: 28px; text-align: center; }
.dlg-btn.is-on { background: #cfe0f3; }
.vsep { width: 1px; height: 28px; background: #e0e0e0; flex: none; }
.sep-a { margin-left: 8px; }
.sep-b { margin-left: 7px; }
.sep-c { margin-left: 8px; height: 30px; }
.radio { display: flex; align-items: center; gap: 6px; color: #333; margin-top: -3px; }
.dot { width: 17px; height: 17px; border: 1px solid #9a9a9a; border-radius: 50%; background: #fff; flex: none; }
.dot.is-on { border-color: #bbb; background: radial-gradient(circle, #2a7fe6 0, #2a7fe6 4px, #fff 4.500px); }
.r1 { margin-left: 9px; }
.r2 { margin-left: 29px; }
.r3 { margin-left: 5px; }
.r4 { margin-left: 29px; }
.dlg-act { display: inline-flex; align-items: center; }
.a-line { margin-left: 14.500px; }
.a-show { margin-left: 13.500px; }
.a-ref { margin-left: 17px; }
.a-level { margin-left: 16px; }
.a-del { margin-left: 19px; }
.a-clear { margin-left: 19px; }
.is-off { color: #c4c4c4; }
.a-align { margin-left: 14px; margin-top: 1px; }

.stage { height: 747px; flex: none; position: relative; background: #000; overflow: hidden; }
.stage-svg { position: absolute; left: 0; top: 0; }
.rebar-info { position: absolute; left: 15px; top: 12px; display: flex; align-items: center; }
.rebar-label { color: #c8c8c8; width: 72px; }
.rebar-select { width: 168px; height: 32px; background: #fff; border-radius: 3px; display: flex; align-items: center; justify-content: space-between; padding: 0 7px 0 9px; color: #444; }

.grid-line { fill: none; stroke: #3b4350; stroke-width: 1.200; stroke-dasharray: 11 3 3 3; }
.grid-tick { fill: none; stroke: #4a5260; stroke-width: 1; }
.grid-text { font-family: "Liberation Sans", sans-serif; font-size: 14px; fill: #454c57; }
.leader { fill: none; stroke: #888; stroke-width: 1; stroke-dasharray: 4 3; }
.section { fill: none; stroke: #eee; stroke-width: 3; }
.green { fill: none; stroke: #00d000; stroke-width: 1.300; }
.blue-dash { fill: none; stroke: #a8bedf; stroke-width: 1.200; stroke-dasharray: 5 3; }
.rebar { fill: none; stroke: #c8141e; stroke-width: 3; }
.rebar-thin { fill: none; stroke: #c8141e; stroke-width: 2; }
.node { fill: none; stroke: #c8a020; stroke-width: 1; }
.white-thin { fill: none; stroke: #ddd; stroke-width: 1; }
.la { font-family: "Liberation Sans", sans-serif; font-size: 15px; fill: #00d000; }
.dim { font-family: "Liberation Sans", sans-serif; font-size: 15px; fill: #e6e6e6; }
.cap { font-family: "Noto Sans CJK SC", sans-serif; font-size: 15px; letter-spacing: 1px; fill: #eee; }
.cap-green { fill: #10e810; }

.dlg-foot { flex: 1; min-height: 0; display: flex; align-items: center; padding: 0 0 2px 3px; gap: 1.500px; position: relative; border-radius: 0 0 6px 6px; }
.ft { width: 30px; height: 30px; border: 1px solid #bcbcbc; border-radius: 4px; background: #fff; display: flex; align-items: center; justify-content: center; flex: none; }
.ft svg { width: 24px; height: 24px; }
.ft-on { background: #dcebfb; border-color: #62a6ea; }
.ft-text { margin-left: 1px; white-space: nowrap; color: #4a4a4a; font-size: 15px; word-spacing: 2px; letter-spacing: .1px; }
.grip { position: absolute; right: 3px; bottom: 3px; width: 10px; height: 10px; }
```
